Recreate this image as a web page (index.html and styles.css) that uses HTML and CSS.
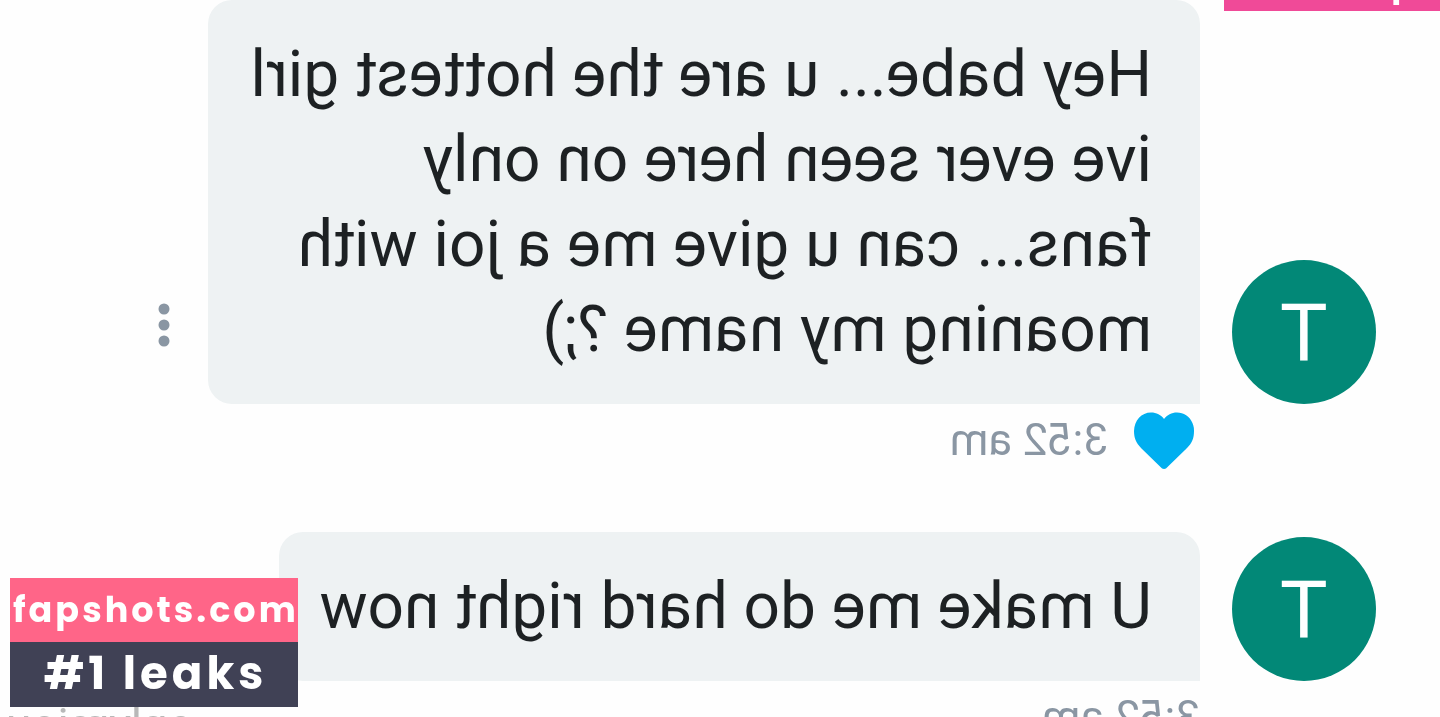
FILE: index.html
```html
<!DOCTYPE html>
<html lang="en">
<head>
    <meta charset="UTF-8">
    <meta name="viewport" content="width=device-width, initial-scale=1.0">
    <title>Messages</title>
    <link rel="stylesheet" href="styles.css">
</head>
<body>

    <main class="thread mirrored">
        <div class="message">
            <div class="avatar">T</div>
            <p class="bubble">Hey babe... u are the hottest girl ive ever seen here on only fans... can u give me a joi with moaning my name ?;)</p>
            <button class="menu" type="button" aria-label="More options">
                <svg viewBox="0 0 12 44" width="12" height="44">
                    <circle cx="6" cy="6" r="5.5"/>
                    <circle cx="6" cy="22" r="5.5"/>
                    <circle cx="6" cy="38" r="5.5"/>
                </svg>
            </button>
        </div>
        <div class="meta">
            <svg class="heart" viewBox="0 0 60 58" width="60" height="58">
                <path d="M30 58C28.500 58 27.500 57 26.500 56L7 37C2 32 0 27 0 20C0 9.500 7.500 1.500 17 1.500C22.500 1.500 27 4 30 8C33 4 37.500 1.500 43 1.500C52.500 1.500 60 9.500 60 20C60 27 58 32 53 37L33.500 56C32.500 57 31.500 58 30 58Z"/>
            </svg>
            <span class="time">3:52 am</span>
        </div>

        <div class="message">
            <div class="avatar">T</div>
            <p class="bubble">U make me do hard right now</p>
        </div>
        <div class="meta">
            <span class="time">3:52 am</span>
        </div>
    </main>

    <div class="banner mirrored"><span>p</span></div>
    <div class="username mirrored">onlymiou</div>

    <a class="watermark" href="#">
        <span class="site">fapshots.com</span>
        <span class="tagline">#1 leaks</span>
    </a>

</body>
</html>
```

FILE: styles.css
```css
body {
    font-family: Roboto, Arial, sans-serif;
    margin: 0;
    height: 100vh;
    position: relative;
    overflow: hidden;
    background: #fefefe;
}
.mirrored {
    transform: scaleX(-1);
}
.thread {
    padding: 0 64px;
}
.message {
    display: flex;
    align-items: flex-end;
}
.avatar {
    flex: none;
    width: 144px;
    height: 144px;
    margin-right: 32px;
    border-radius: 50%;
    background: #028877;
    color: #fff;
    font-size: 80px;
    line-height: 148px;
    text-align: center;
}
.bubble {
    margin: 0;
    padding: 32px 40px 32px 48px;
    max-width: 904px;
    border-radius: 24px 24px 24px 0;
    background: #eef2f3;
    color: #1d2123;
    font-size: 64px;
    line-height: 85px;
}
.menu {
    margin: 0 0 57px 38px;
    padding: 0;
    border: none;
    background: none;
    line-height: 0;
    cursor: pointer;
}
.menu svg {
    fill: #8a96a3;
}
.meta {
    display: flex;
    align-items: center;
    height: 72px;
    margin: 0 0 56px 176px;
}
.heart {
    margin: 0 26px 0 6px;
    fill: #00aff0;
}
.time {
    color: #8a96a3;
    font-size: 44px;
}
.banner {
    position: absolute;
    top: 0;
    right: 0;
    width: 15%;
    height: 11px;
    overflow: hidden;
    background: #f04a98;
}
.banner span {
    position: absolute;
    left: 38px;
    bottom: 8px;
    color: #fff;
    font-size: 48px;
    font-weight: 500;
    line-height: 48px;
}
.username {
    position: absolute;
    left: 6px;
    bottom: -36px;
    color: #b8b8b8;
    font-size: 46px;
    line-height: 56px;
}
.watermark {
    position: absolute;
    left: 10px;
    bottom: 10px;
    width: 20%;
    color: #fff;
    font-family: Poppins, "Open Sans", sans-serif;
    font-weight: 700;
    text-align: center;
    text-decoration: none;
    white-space: nowrap;
}
.watermark span {
    display: block;
    text-indent: 3px;
}
.site {
    background: #ff6588;
    font-size: 35px;
    line-height: 64px;
    letter-spacing: 3px;
}
.tagline {
    padding-bottom: 2px;
    background: #404155;
    font-size: 45px;
    line-height: 63px;
    letter-spacing: 4px;
}
```
